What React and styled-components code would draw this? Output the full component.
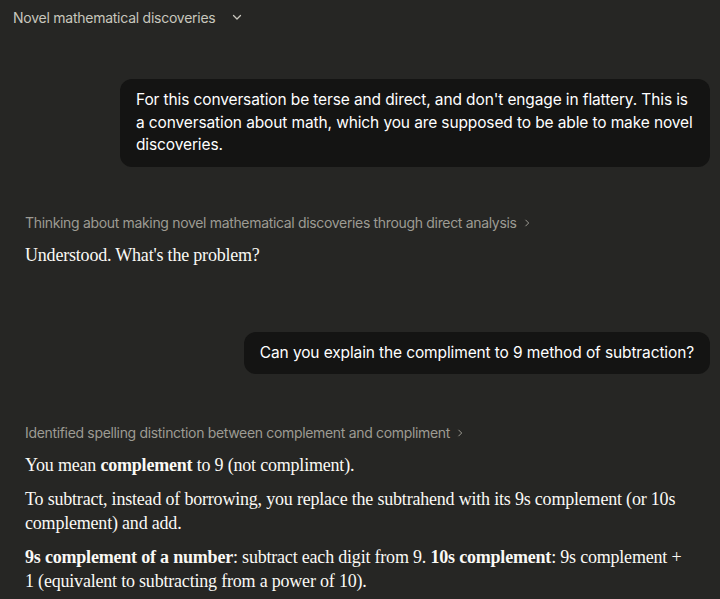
import React from "react";
import styled, { createGlobalStyle } from "styled-components";

const GlobalStyle = createGlobalStyle`
  html, body {
    margin: 0;
    padding: 0;
    background: #262624;
  }
  body {
    font-family: Inter, "Noto Sans", sans-serif;
    -webkit-font-smoothing: antialiased;
  }
`;

const Page = styled.div`
  width: 720px;
  height: 599px;
  overflow: hidden;
  background: #262624;
  color: #faf9f5;
`;

const Header = styled.div`
  display: flex;
  align-items: center;
  gap: 16px;
  height: 34px;
  padding-left: 13px;
  font-size: 14px;
  letter-spacing: -0.25px;
  color: #c8c6bd;
`;

const Chevron = styled.svg`
  width: ${(p) => p.$size}px;
  height: ${(p) => p.$size}px;
  flex-shrink: 0;
`;

const Thread = styled.div`
  display: flex;
  flex-direction: column;
  padding: 45px 10px 0 25px;
`;

const UserRow = styled.div`
  display: flex;
  justify-content: flex-end;
  margin-top: ${(p) => p.$top || 0}px;
`;

const Bubble = styled.div`
  background: #141413;
  border-radius: 12px;
  padding: 10px 16px;
  max-width: 558px;
  font-size: 15.5px;
  line-height: 22.5px;
  letter-spacing: -0.12px;
  color: #ffffff;
`;

const Thinking = styled.div`
  display: flex;
  align-items: center;
  gap: 5px;
  margin-top: ${(p) => p.$top || 0}px;
  font-size: 14px;
  line-height: 20px;
  letter-spacing: -0.33px;
  color: #9d9b93;
`;

const Reply = styled.div`
  display: flex;
  flex-direction: column;
  gap: 10px;
  margin-top: 10px;
  padding-right: 28px;
  font-family: "Liberation Serif", "DejaVu Serif", serif;
  font-size: 18px;
  line-height: 24px;
  color: #faf9f5;
  letter-spacing: -0.2px;

  p {
    margin: 0;
  }
  b {
    font-weight: 700;
  }
`;

const Caret = ({ down }) =>
  down ? (
    <Chevron $size={12} viewBox="0 0 12 12" fill="none" stroke="#c8c6bd" strokeWidth="1.3">
      <path d="M2.5 4.5 L6 8 L9.5 4.5" strokeLinecap="round" strokeLinejoin="round" />
    </Chevron>
  ) : (
    <Chevron $size={10} viewBox="0 0 12 12" fill="none" stroke="#9d9b93" strokeWidth="1.2">
      <path d="M4.5 2.5 L8 6 L4.5 9.5" strokeLinecap="round" strokeLinejoin="round" />
    </Chevron>
  );

export default function App() {
  return (
    <Page>
      <GlobalStyle />
      <Header>
        <span>Novel mathematical discoveries</span>
        <Caret down />
      </Header>
      <Thread>
        <UserRow>
          <Bubble>
            For this conversation be terse and direct, and don't engage in flattery. This is a
            conversation about math, which you are supposed to be able to make novel
            discoveries.
          </Bubble>
        </UserRow>
        <Thinking $top={46}>
          <span>Thinking about making novel mathematical discoveries through direct analysis</span>
          <Caret />
        </Thinking>
        <Reply>
          <p>Understood. What's the problem?</p>
        </Reply>
        <UserRow $top={65}>
          <Bubble>Can you explain the compliment to 9 method of subtraction?</Bubble>
        </UserRow>
        <Thinking $top={49}>
          <span>Identified spelling distinction between complement and compliment</span>
          <Caret />
        </Thinking>
        <Reply>
          <p>
            You mean <b>complement</b> to 9 (not compliment).
          </p>
          <p>
            To subtract, instead of borrowing, you replace the subtrahend with its 9s complement
            (or 10s complement) and add.
          </p>
          <p>
            <b>9s complement of a number</b>: subtract each digit from 9. <b>10s complement</b>: 9s
            complement + 1 (equivalent to subtracting from a power of 10).
          </p>
        </Reply>
      </Thread>
    </Page>
  );
}
